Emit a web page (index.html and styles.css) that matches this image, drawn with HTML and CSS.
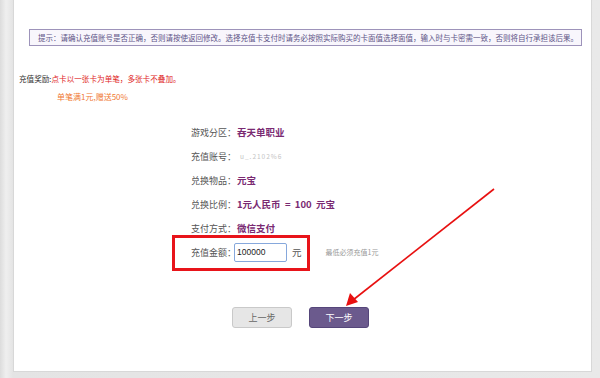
FILE: index.html
```html
<!DOCTYPE html>
<html lang="zh-CN">
<head>
    <meta charset="UTF-8">
    <meta name="viewport" content="width=device-width, initial-scale=1.0">
    <title>充值确认</title>
    <link rel="stylesheet" href="styles.css">
</head>
<body>

<div class="page">
    <div class="panel">
        <div class="notice">提示：请确认充值账号是否正确，否则请按使返回修改。选择充值卡支付时请务必按照实际购买的卡面值选择面值，输入时与卡密需一致，否则将自行承担该后果。</div>

        <div class="reward">
            <p class="reward-line">充值奖励:<span class="reward-red">点卡以一张卡为单笔，多张卡不叠加。</span></p>
            <p class="reward-bonus">单笔满1元,赠送50%</p>
        </div>

        <form class="pay-form">
            <div class="row">
                <span class="label">游戏分区：</span>
                <span class="value">吞天单职业</span>
            </div>
            <div class="row">
                <span class="label">充值账号：</span>
                <span class="account">u_.2102%6</span>
            </div>
            <div class="row">
                <span class="label">兑换物品：</span>
                <span class="value">元宝</span>
            </div>
            <div class="row">
                <span class="label">兑换比例：</span>
                <span class="value">1元人民币 &nbsp;= &nbsp;100 &nbsp;元宝</span>
            </div>
            <div class="row">
                <span class="label">支付方式：</span>
                <span class="value">微信支付</span>
            </div>
            <div class="row amount-row">
                <div class="amount-box">
                    <label class="label label-amount" for="amount">充值金额：</label>
                    <input type="text" id="amount" class="amount-input" value="100000">
                    <span class="unit">元</span>
                </div>
                <span class="hint">最低必须充值1元</span>
            </div>

            <div class="buttons">
                <button type="button" class="btn btn-prev">上一步</button>
                <button type="button" class="btn btn-next">下一步</button>
            </div>
        </form>
    </div>

    <!-- red arrow annotation -->
    <svg class="arrow" width="600" height="378" viewBox="0 0 600 378">
        <line x1="494" y1="189" x2="353" y2="300" stroke="#e81010" stroke-width="1.6"/>
        <polygon points="346,306 350,293 358,302" fill="#e81010"/>
    </svg>
</div>

</body>
</html>
```

FILE: styles.css
```css
body {
    margin: 0;
    font-family: "Noto Sans CJK SC", "Noto Sans", sans-serif;
    background-color: #e7e7e7;
}
.page {
    position: relative;
    width: 600px;
    height: 378px;
    overflow: hidden;
    background: linear-gradient(90deg, #dcdcdc 0, #efefef 6px, #e4e4e4 13px, #e9e9e9 100%);
}
.panel {
    margin-left: 13px;
    width: 579px;
    height: 372px;
    background-color: #fff;
    border: 1px solid #d8d8d8;
    border-top: none;
    padding-top: 29px;
    box-sizing: border-box;
}
.notice {
    margin-left: 15px;
    width: 553px;
    height: 17px;
    box-sizing: border-box;
    border: 1px solid #9d93ba;
    background-color: #f8f6fc;
    color: #5e5587;
    font-size: 7.5px;
    line-height: 15px;
    padding-left: 8px;
    white-space: nowrap;
}
.reward {
    margin-top: 27px;
    font-size: 7.6px;
}
.reward p {
    margin: 0;
    line-height: 12px;
}
.reward-line {
    padding-left: 5px;
    color: #333;
}
.reward-red {
    color: #e02424;
}
.reward-bonus {
    margin-top: 6px !important;
    padding-left: 43px;
    color: #f07a34;
    font-size: 8px;
}
.pay-form {
    margin-top: 17px;
    padding-left: 177px;
}
.row {
    display: flex;
    align-items: center;
    height: 24px;
    font-size: 9.5px;
    white-space: nowrap;
}
.label {
    flex: none;
    width: 46px;
    color: #555;
    font-size: 9px;
}
.value {
    color: #7a2a72;
    font-weight: bold;
}
.account {
    margin-left: 3px;
    color: #c4c4c4;
    font-size: 6.5px;
    letter-spacing: 1px;
}
.amount-box {
    position: relative;
    display: flex;
    align-items: center;
}
/* red highlight frame around the amount field */
.amount-box::before {
    content: "";
    position: absolute;
    left: -19px;
    right: -8px;
    top: -8px;
    bottom: -9px;
    border: 3px solid #e8141a;
}
.label-amount {
    width: 43px;
}
.amount-input {
    width: 53px;
    height: 19px;
    box-sizing: border-box;
    border: 1px solid #86a8dc;
    border-radius: 2px;
    padding: 0 2px;
    font-family: "Liberation Sans", Arial, sans-serif;
    font-size: 8.5px;
    color: #222;
    outline: none;
}
.unit {
    margin-left: 5px;
    color: #555;
}
.hint {
    margin-left: 24px;
    color: #999;
    font-size: 7px;
}
.buttons {
    display: flex;
    gap: 17px;
    margin-top: 43px;
    margin-left: 41px;
}
.btn {
    width: 60px;
    height: 21px;
    border-radius: 3px;
    font-family: "Noto Sans CJK SC", sans-serif;
    font-size: 9px;
    cursor: pointer;
    padding: 0;
}
.btn-prev {
    background-color: #e6e6e6;
    border: 1px solid #c9c9c9;
    color: #666;
}
.btn-next {
    background-color: #6b5a8d;
    border: 1px solid #55467a;
    color: #fff;
}
.arrow {
    position: absolute;
    left: 0;
    top: 0;
    pointer-events: none;
}
```
